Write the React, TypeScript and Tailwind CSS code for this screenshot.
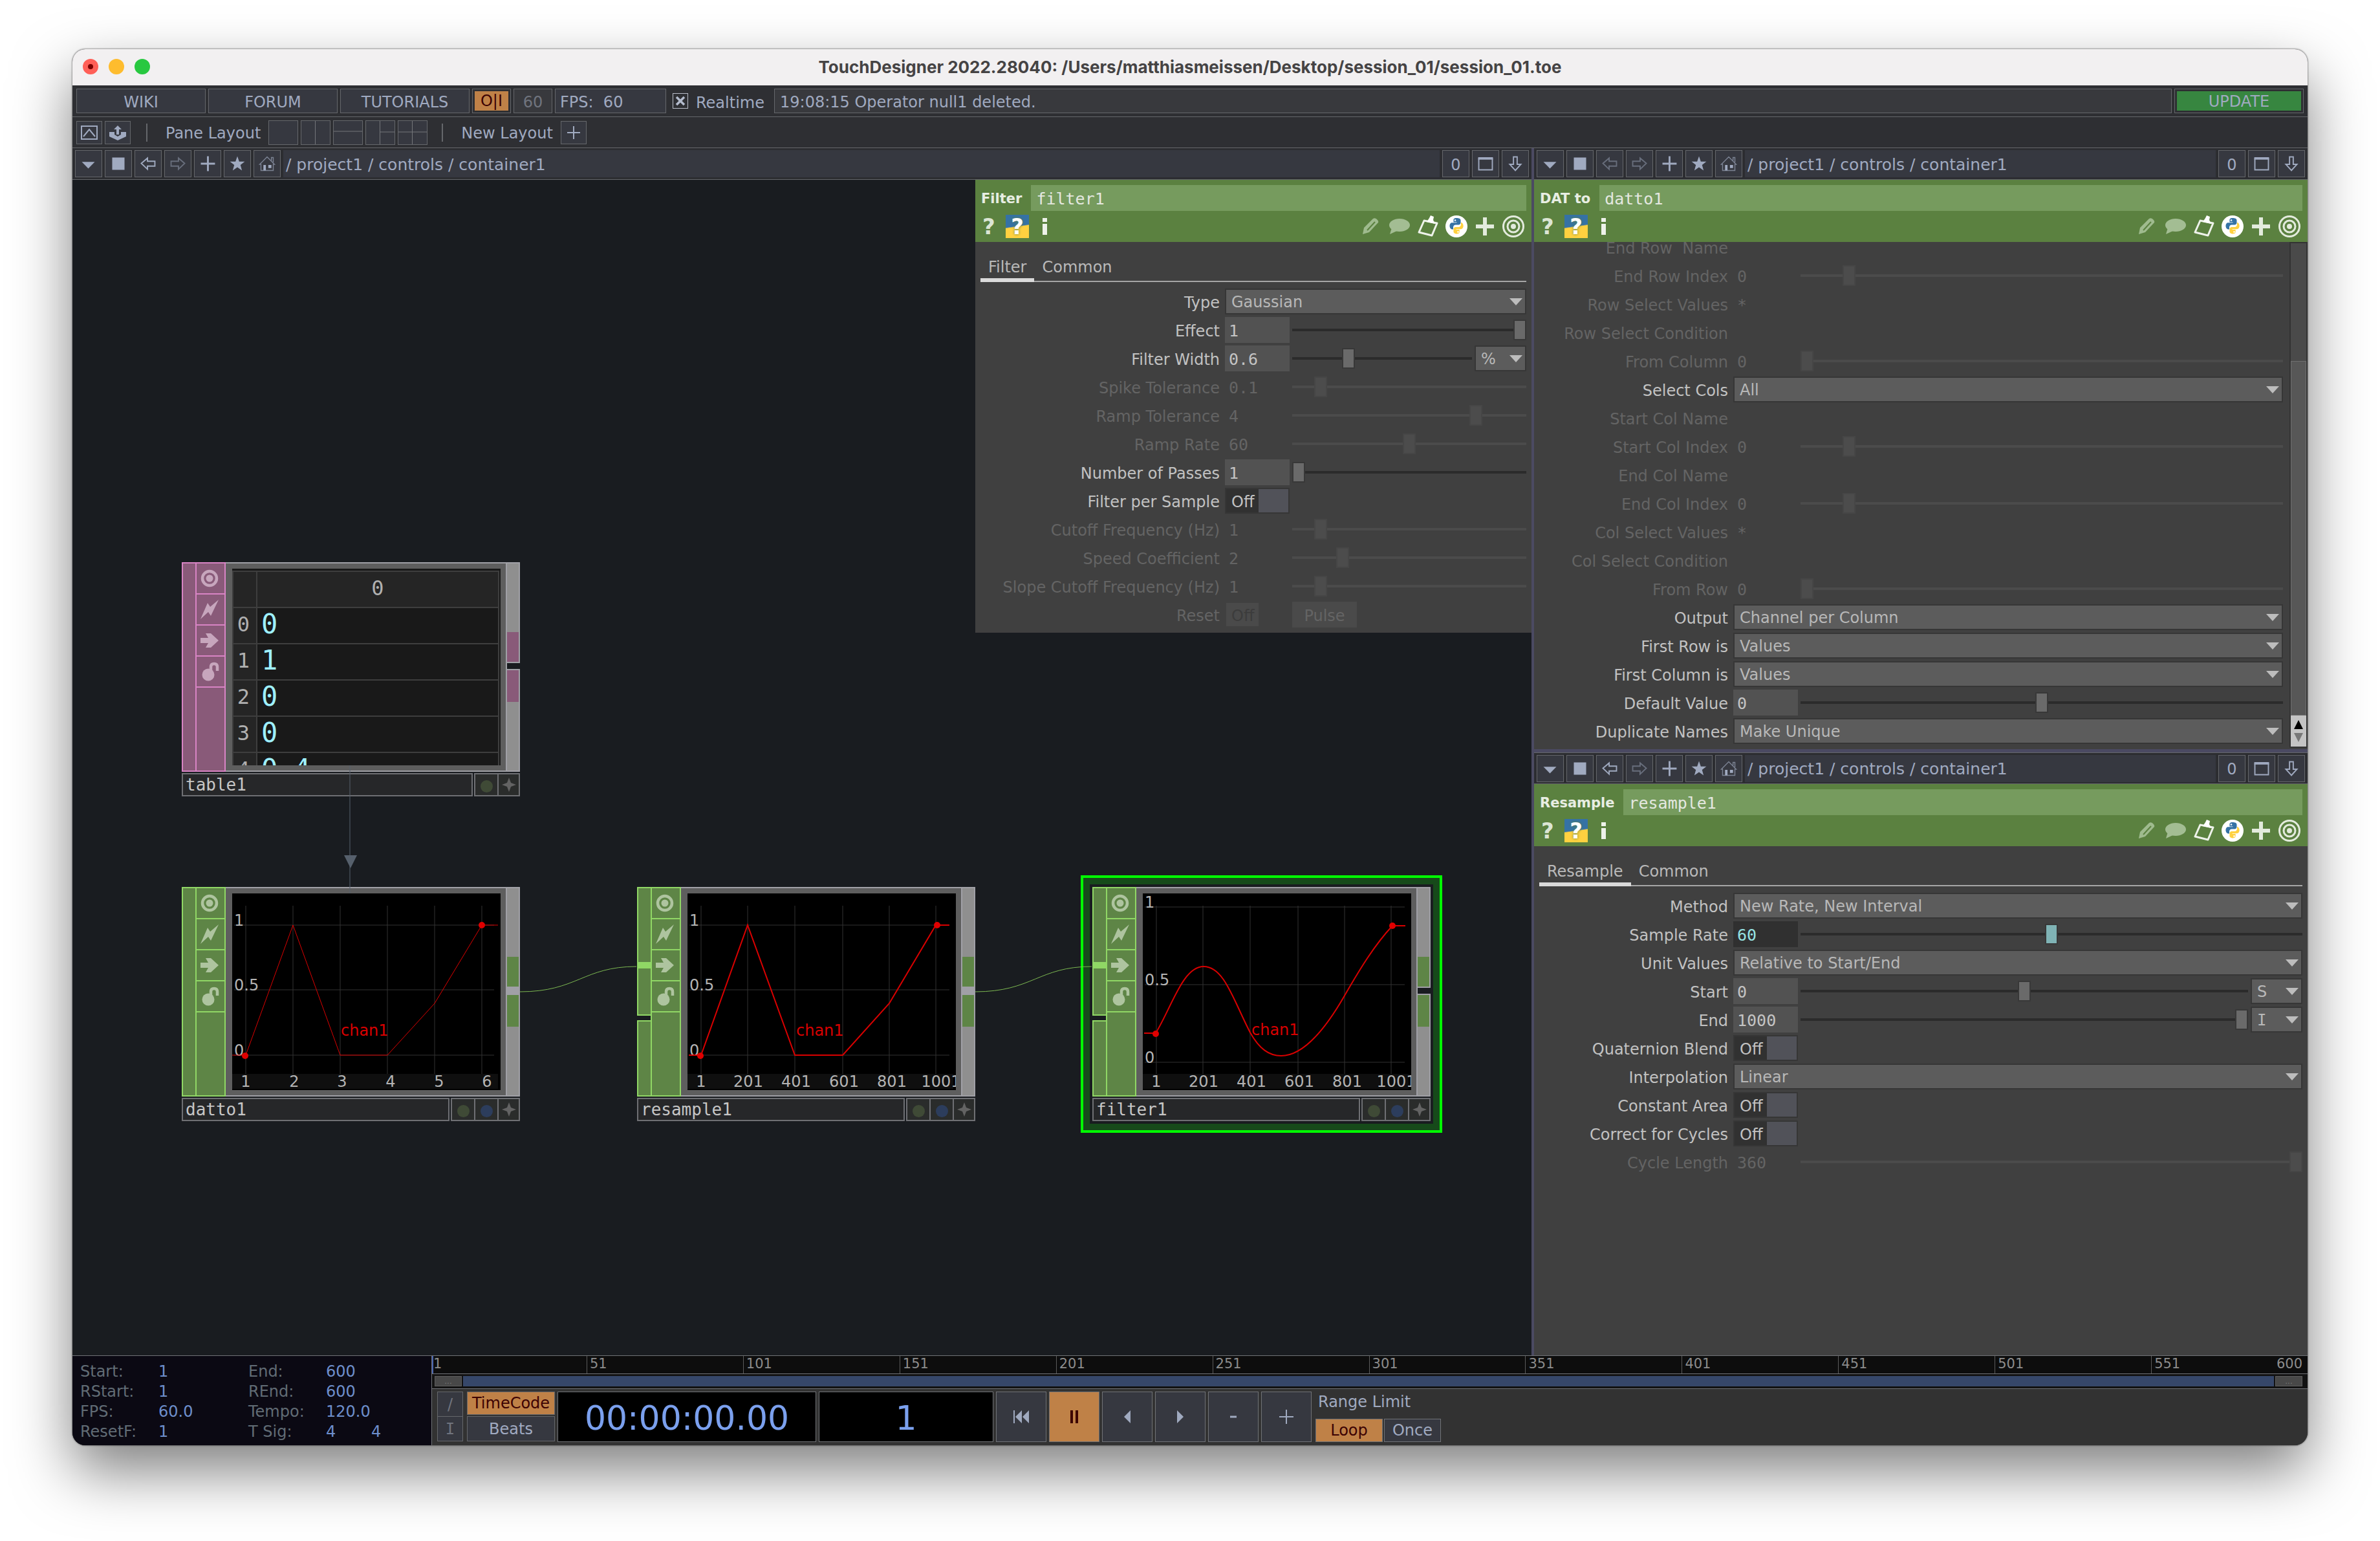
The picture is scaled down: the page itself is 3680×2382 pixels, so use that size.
import React, { useId } from "react";

const SANS = "font-['DejaVu_Sans',sans-serif]";
const MONO = "font-['DejaVu_Sans_Mono',monospace]";

/* ---------- pane bar ---------- */

const paneBtn =
  "flex size-[42px] shrink-0 items-center justify-center border border-[#65676b] bg-[#363840] text-2xl text-[#a0aac0]";

function Glyph({ children, size = 40 }: { children: React.ReactNode; size?: number }) {
  return (
    <svg viewBox="0 0 42 42" width={size} height={size} fill="none" stroke="#a0aac0" strokeWidth="2" aria-hidden="true">
      {children}
    </svg>
  );
}

function PaneBar({ backEnabled, className = "" }: { backEnabled: boolean; className?: string }) {
  const back = backEnabled ? "#a0aac0" : "#686e7c";
  return (
    <div className={`flex h-[49px] shrink-0 items-center gap-1 border-b border-[#65676b] bg-[#2c2d31] px-1 ${className}`}>
      <button className={paneBtn} aria-label="Pane type">
        <Glyph><path d="M10 18H31L20.500 29Z" fill="#a0aac0" stroke="none" /></Glyph>
      </button>
      <button className={paneBtn} aria-label="Stop">
        <Glyph><rect x="11" y="11" width="20" height="20" fill="#a0aac0" stroke="none" /></Glyph>
      </button>
      <button className={paneBtn} aria-label="Back">
        <Glyph><path d="M10 20.500L20 12V17H32V25H20V30Z" stroke={back} /></Glyph>
      </button>
      <button className={paneBtn} aria-label="Forward">
        <Glyph><path d="M32 20.500L22 12V17H10V25H22V30Z" stroke="#686e7c" /></Glyph>
      </button>
      <button className={paneBtn} aria-label="Add bookmark">
        <Glyph><path d="M10 21H33M21.500 9V33" strokeWidth="3" /></Glyph>
      </button>
      <button className={paneBtn} aria-label="Bookmarks">
        <Glyph>
          <path d="M21 9L24 17.500H33L26 23L28.500 32L21 26.800L13.500 32L16 23L9 17.500H18Z" fill="#a0aac0" stroke="none" />
        </Glyph>
      </button>
      <button className={paneBtn} aria-label="Home">
        <Glyph>
          <path d="M9 22L21 10L33 22H31V32H11V22ZM28 16V11H31V19" stroke="#7b8292" strokeWidth="1.500" />
          <path d="M15 23H19V32H15ZM23 23H28V28H23Z" fill="#a0aac0" stroke="none" />
        </Glyph>
      </button>
      <div className="flex h-[42px] flex-1 items-center bg-[#363840] pt-[3px] pl-1 text-[25px] whitespace-pre text-[#a0aac0]">
        / project1 / controls / container1
      </div>
      <button className={`${paneBtn} pt-[3px]`}>0</button>
      <button className={paneBtn} aria-label="Maximize pane">
        <Glyph><path d="M10 12V31H32V12" /><path d="M9 12.500H33" strokeWidth="4" /></Glyph>
      </button>
      <button className={paneBtn} aria-label="Detach pane">
        <Glyph><path d="M21 32L12 22H18V10H24V22H30Z" /></Glyph>
      </button>
    </div>
  );
}

/* ---------- operator header ---------- */

function PythonMark() {
  return (
    <g>
      <path
        d="M17.800 7C13 7 13 9.500 13 11V14H18.500V15H10.500C7.500 15 6.500 18 6.500 20.500S8 26 10.500 26H12.500V22.500C12.500 20 14.500 18.500 16.500 18.500H21.500C23.500 18.500 25 17 25 15V11C25 8 22 7 17.800 7Z"
        transform="translate(1.500 -1.500) scale(.92)"
        fill="#3572a5"
      />
      <path
        d="M18.200 31C23 31 23 28.500 23 27V24H17.500V23H25.500C28.500 23 29.500 20 29.500 17.500S28 12 25.500 12H25.500V15.500C25.500 18 23.500 19.500 21.500 19.500H16.500C14.500 19.500 13 21 13 23V27C13 30 16 31 18.200 31Z"
        transform="translate(1.500 1) scale(.92)"
        fill="#ffd140"
      />
      <circle cx="16" cy="8.500" r="1.300" fill="#fff" />
      <circle cx="20.500" cy="26.500" r="1.300" fill="#fff" />
    </g>
  );
}

function OpHeader({ kind, name }: { kind: string; name: string }) {
  const id = useId();
  return (
    <div className="flex h-24 shrink-0 flex-col bg-[#5b8140] pt-2">
      <div className="flex h-10 items-center pr-2 pl-[9px]">
        <label htmlFor={id} className="pt-[3px] pr-[14px] text-[21px] font-bold whitespace-pre text-[#e8eee3]">
          {kind}
        </label>
        <input
          id={id}
          defaultValue={name}
          className={`h-10 min-w-0 flex-1 bg-[#769b5e] px-2 pt-[2px] text-[25px] text-[#e4e8e0] ${MONO}`}
        />
      </div>
      <div className="flex h-12 items-center justify-between pr-[10px] pl-[11px]">
        <div className="flex items-center gap-2">
          <button aria-label="Help" className="h-9 w-7 text-left text-[34px] leading-9 font-bold text-[#dbe5d4]">?</button>
          <button
            aria-label="Python help"
            className="h-9 w-9 bg-[linear-gradient(172deg,#3572a5_48%,#ffd140_52%)] text-center text-[34px] leading-9 font-bold text-white [text-shadow:0_0_4px_#5b8140]"
          >
            ?
          </button>
          <button aria-label="Info" className="h-9 w-10 pl-2 text-left">
            <svg viewBox="0 0 16 36" width="16" height="36" fill="#eef2ea" aria-hidden="true">
              <rect x="5" y="5" width="7" height="6" />
              <rect x="5" y="14" width="7" height="17" />
            </svg>
          </button>
        </div>
        <div className="flex items-center gap-2">
          <button aria-label="Edit">
            <svg viewBox="0 0 36 36" width="36" height="36" aria-hidden="true">
              <path d="M5 30L7 20L21 6Q24 4 27 7T29 12L15 27Z" fill="#9fbb8e" />
              <path d="M12 24L24 11" stroke="#5b8140" strokeWidth="2" />
            </svg>
          </button>
          <button aria-label="Comment">
            <svg viewBox="0 0 36 36" width="36" height="36" fill="#a3bd93" aria-hidden="true">
              <ellipse cx="18" cy="16" rx="16" ry="10" />
              <path d="M6 20L3 30L16 24Z" />
            </svg>
          </button>
          <button aria-label="Copy parameters">
            <svg viewBox="0 0 36 36" width="36" height="36" aria-hidden="true">
              <path d="M12 9L32 13L24 32L4 27Z" fill="none" stroke="#eef2ea" strokeWidth="3" strokeLinejoin="round" />
              <path d="M16 11L20 5L22 1L27 3L26 8L29 14Z" fill="#fff" />
            </svg>
          </button>
          <button aria-label="Python">
            <svg viewBox="0 0 36 36" width="36" height="36" aria-hidden="true">
              <circle cx="18" cy="18" r="17" fill="#fff" />
              <PythonMark />
            </svg>
          </button>
          <button aria-label="Add parameter">
            <svg viewBox="0 0 36 36" width="36" height="36" stroke="#e3ebdd" strokeWidth="6" aria-hidden="true">
              <path d="M4 18H32M18 4V32" />
            </svg>
          </button>
          <button aria-label="View options">
            <svg viewBox="0 0 36 36" width="36" height="36" fill="none" stroke="#e3ebdd" strokeWidth="3" aria-hidden="true">
              <circle cx="18" cy="18" r="15.500" />
              <circle cx="18" cy="18" r="9" />
              <circle cx="18" cy="18" r="2.500" fill="#e3ebdd" />
            </svg>
          </button>
        </div>
      </div>
    </div>
  );
}

function Tabs({ items }: { items: string[] }) {
  return (
    <div className="mx-2 mt-[18px] mb-[10px] flex h-11 items-stretch text-2xl text-[#b9b9b9]">
      {items.map((t, i) => (
        <button
          key={t}
          className={
            i === 0
              ? "border-b-[6px] border-[#dadada] px-3 pt-[3px]"
              : "flex-1 border-b-2 border-[#a6a6a6] pt-[3px] pb-1 pl-3 text-left"
          }
        >
          {t}
        </button>
      ))}
    </div>
  );
}

/* ---------- parameter rows ---------- */

type Param = {
  label: string;
  off?: boolean;
  menu?: string;
  value?: string;
  slide?: number;
  unit?: string;
  toggle?: boolean;
  pulse?: boolean;
  expr?: boolean;
};

function Menu({ id, value, label, className = "" }: { id?: string; value: string; label?: string; className?: string }) {
  return (
    <span className={`relative flex h-10 ${className}`}>
      <select
        id={id}
        aria-label={label}
        defaultValue={value}
        className={`h-10 w-full appearance-none border-2 border-[#363636] bg-[#5c5c5c] pt-[2px] pl-2 text-2xl text-[#b8b8b8] ${value === "I" ? MONO : ""}`}
      >
        <option>{value}</option>
      </select>
      <svg viewBox="0 0 20 12" width="20" height="12" className="pointer-events-none absolute top-3.5 right-1.5" aria-hidden="true">
        <path d="M0 1H20L10 12Z" fill="#bdbdbd" />
      </svg>
    </span>
  );
}

const rangeBase =
  "h-10 min-w-0 flex-1 appearance-none bg-transparent [&::-webkit-slider-runnable-track]:h-1 [&::-webkit-slider-thumb]:-mt-3.5 [&::-webkit-slider-thumb]:h-8 [&::-webkit-slider-thumb]:w-5 [&::-webkit-slider-thumb]:appearance-none [&::-webkit-slider-thumb]:border-2";
const rangeOn =
  "[&::-webkit-slider-runnable-track]:bg-[#2b2b2b] [&::-webkit-slider-thumb]:border-[#383838] [&::-webkit-slider-thumb]:bg-[#6a6a6a]";
const rangeOff =
  "[&::-webkit-slider-runnable-track]:bg-[#4b4b4b] [&::-webkit-slider-thumb]:border-[#464646] [&::-webkit-slider-thumb]:bg-[#4c4c4c]";
const rangeExpr =
  "[&::-webkit-slider-runnable-track]:bg-[#2b2b2b] [&::-webkit-slider-thumb]:border-[#383838] [&::-webkit-slider-thumb]:bg-[#7fb3b5]";

function Row({ p, cols }: { p: Param; cols: string }) {
  const id = useId();
  const field = p.off ? "bg-transparent text-[#646464]" : p.expr ? "bg-[#303030] text-[#96e3e3]" : "bg-[#525252] text-[#c4c4c4]";
  return (
    <div className={`grid h-10 ${cols} items-center`}>
      <label
        htmlFor={id}
        className={`pt-[3px] pr-2 text-right text-2xl whitespace-pre ${p.off ? "text-[#646464]" : "text-[#c2c2c2]"}`}
      >
        {p.label}
      </label>
      <div className="flex h-10 min-w-0 gap-1">
        {p.menu !== undefined && <Menu id={id} value={p.menu} className="flex-1" />}
        {p.value !== undefined && (
          <input
            id={id}
            defaultValue={p.value}
            disabled={p.off}
            className={`h-10 w-[100px] shrink-0 pt-[2px] pl-1.5 text-[25px] ${MONO} ${field}`}
          />
        )}
        {p.slide !== undefined && (
          <input
            type="range"
            aria-label={`${p.label} slider`}
            min={0}
            max={100}
            defaultValue={p.slide}
            disabled={p.off}
            className={`${rangeBase} ${p.off ? rangeOff : p.expr ? rangeExpr : rangeOn}`}
          />
        )}
        {p.unit && <Menu value={p.unit} label={`${p.label} unit`} className="w-20" />}
        {p.toggle && (
          <span className={`flex h-10 w-[100px] border-2 text-2xl ${p.off ? "border-transparent" : "border-[#363636]"}`}>
            <span className={`w-[50px] pt-1 pl-2 leading-8 ${p.off ? "bg-[#4a4a4a] text-[#3c3c3c]" : "bg-[#313131] text-[#c2c2c2]"}`}>
              Off
            </span>
            <input
              id={id}
              type="checkbox"
              disabled={p.off}
              className={`h-full flex-1 appearance-none ${p.off ? "bg-transparent" : "bg-[#515259]"}`}
            />
          </span>
        )}
        {p.pulse && (
          <button disabled className="h-10 w-[100px] bg-[#4a4a4a] pt-[3px] text-2xl text-[#646464]">
            Pulse
          </button>
        )}
      </div>
    </div>
  );
}

const filterParams: Param[] = [
  { label: "Type", menu: "Gaussian" },
  { label: "Effect", value: "1", slide: 100 },
  { label: "Filter Width", value: "0.6", slide: 30, unit: "%" },
  { label: "Spike Tolerance", value: "0.1", slide: 10, off: true },
  { label: "Ramp Tolerance", value: "4", slide: 80, off: true },
  { label: "Ramp Rate", value: "60", slide: 50, off: true },
  { label: "Number of Passes", value: "1", slide: 0 },
  { label: "Filter per Sample", toggle: true },
  { label: "Cutoff Frequency (Hz)", value: "1", slide: 10, off: true },
  { label: "Speed Coefficient", value: "2", slide: 20, off: true },
  { label: "Slope Cutoff Frequency (Hz)", value: "1", slide: 10, off: true },
  { label: "Reset", toggle: true, pulse: true, off: true },
];

const dattoParams: Param[] = [
  { label: "End Row  Name", value: "", off: true },
  { label: "End Row Index", value: "0", slide: 9, off: true },
  { label: "Row Select Values", value: "*", off: true },
  { label: "Row Select Condition", value: "", off: true },
  { label: "From Column", value: "0", slide: 0, off: true },
  { label: "Select Cols", menu: "All" },
  { label: "Start Col Name", value: "", off: true },
  { label: "Start Col Index", value: "0", slide: 9, off: true },
  { label: "End Col Name", value: "", off: true },
  { label: "End Col Index", value: "0", slide: 9, off: true },
  { label: "Col Select Values", value: "*", off: true },
  { label: "Col Select Condition", value: "", off: true },
  { label: "From Row", value: "0", slide: 0, off: true },
  { label: "Output", menu: "Channel per Column" },
  { label: "First Row is", menu: "Values" },
  { label: "First Column is", menu: "Values" },
  { label: "Default Value", value: "0", slide: 50 },
  { label: "Duplicate Names", menu: "Make Unique" },
];

const resampleParams: Param[] = [
  { label: "Method", menu: "New Rate, New Interval" },
  { label: "Sample Rate", value: "60", slide: 50, expr: true },
  { label: "Unit Values", menu: "Relative to Start/End" },
  { label: "Start", value: "0", slide: 50, unit: "S" },
  { label: "End", value: "1000", slide: 100, unit: "I" },
  { label: "Quaternion Blend", toggle: true },
  { label: "Interpolation", menu: "Linear" },
  { label: "Constant Area", toggle: true },
  { label: "Correct for Cycles", toggle: true },
  { label: "Cycle Length", value: "360", slide: 100, off: true },
];

/* ---------- network nodes ---------- */

type Tone = "pink" | "green";
const toneBg = { pink: "bg-[#895a79]", green: "bg-[#5e8546]" };
const toneLine = { pink: "border-[#d884c4]", green: "border-[#90d765]" };
const toneGlyph = { pink: "#c7a6bd", green: "#aec49f" };

function FlagIcon({ kind, color }: { kind: number; color: string }) {
  return (
    <svg viewBox="0 0 32 32" width="32" height="32" fill={color} aria-hidden="true">
      {kind === 0 && (
        <>
          <circle cx="16" cy="16" r="11" fill="none" stroke={color} strokeWidth="4.500" />
          <circle cx="16" cy="16" r="5.500" />
        </>
      )}
      {kind === 1 && <path d="M30 1L18 26L14 20L2 31L13 6L17 12Z" />}
      {kind === 2 && <path d="M2 12H14L10 5H18L30 16L18 27H10L14 20H2Z" />}
      {kind === 3 && (
        <>
          <circle cx="14" cy="21" r="9.500" />
          <path d="M18 14V9Q18 4 23 4T28 9V15" fill="none" stroke={color} strokeWidth="4.500" />
        </>
      )}
    </svg>
  );
}

function Node({
  tone,
  name,
  input,
  wired,
  dots,
  children,
}: {
  tone: Tone;
  name: string;
  input?: boolean;
  wired?: boolean;
  dots: string[];
  children: React.ReactNode;
}) {
  const bg = toneBg[tone];
  const line = toneLine[tone];
  return (
    <div className="w-[523px] bg-[#191c20]">
      <div className="flex h-[324px]">
        {input ? (
          <div className="flex w-[21px] flex-col gap-[7px]">
            <div className={`h-[199px] border-y-2 border-l-2 pt-[114px] ${bg} ${line}`}>
              <div className="h-[10px] bg-[#90d765]" />
            </div>
            <div className={`flex-1 border-y-2 border-l-2 ${bg} ${line}`} />
          </div>
        ) : (
          <div className={`w-[21px] border-y-2 border-l-2 ${bg} ${line}`} />
        )}
        <div className={`flex w-[47px] flex-col border-2 ${bg} ${line}`}>
          {["Viewer", "Cook", "Export", "Lock"].map((f, i) => (
            <button key={f} aria-label={f} className={`flex h-12 items-center justify-center border-b-2 pr-[3px] ${line}`}>
              <FlagIcon kind={i} color={toneGlyph[tone]} />
            </button>
          ))}
        </div>
        <div className="min-w-0 flex-1 border-y-2 border-[#a0a0a6] bg-[#5e5e5e] py-2 pr-2 pl-2.5">
          <div className="h-[304px] overflow-hidden bg-black">{children}</div>
        </div>
        <div className="flex w-[22px] flex-col">
          <div className="flex h-[156px] flex-col justify-end border-x-2 border-t-2 border-b-2 border-[#a0a0a6] bg-[#8f8f8f]">
            <div className={`h-[46px] ${bg}`} />
          </div>
          <div className={`h-[9px] ${wired ? "bg-[#a0a0a6]" : "border-l-2 border-[#a0a0a6]"}`} />
          <div className="flex-1 border-2 border-[#a0a0a6] bg-[#8f8f8f]">
            <div className={`h-[49px] ${bg}`} />
          </div>
        </div>
      </div>
      <div className="mt-0.5 flex h-9 gap-0.5">
        <div className={`flex flex-1 items-center border-2 border-[#6e6f73] bg-[#262729] pl-1 text-[26px] leading-8 text-[#c6c6c6] ${MONO}`}>
          {name}
        </div>
        <div className="flex divide-x-2 divide-[#6e6f73] border-2 border-[#6e6f73] bg-[#2a2c2b]">
          {dots.map((d) => (
            <span key={d} className="flex w-9 items-center justify-center pt-1">
              <span className={`size-[19px] rounded-full ${d}`} />
            </span>
          ))}
          <span className="flex w-[31px] items-center justify-center">
            <svg viewBox="0 0 22 22" width="22" height="22" fill="#636363" aria-hidden="true">
              <path d="M11 0L14 8L22 11L14 14L11 22L8 14L0 11L8 8Z" />
            </svg>
          </span>
        </div>
      </div>
    </div>
  );
}

const GREEN_DOT = "bg-[#3f4a36]";
const BLUE_DOT = "bg-[#2c3d5c]";

function Chart({
  xs,
  ys,
  labels,
  labelX,
  path,
  dots,
  tag,
  width = 2,
}: {
  xs: number[];
  ys: number[];
  labels: string[];
  labelX: number[];
  path: string;
  dots: [number, number][];
  tag: [number, number];
  width?: number;
}) {
  return (
    <svg viewBox="0 0 415 304" width="415" height="304" className={`block text-2xl ${SANS}`} role="img" aria-label="Channel viewer">
      <rect width="411" height="23" y="279" fill="#0f0f0f" />
      {xs.map((x) => (
        <path key={x} d={`M${x} 19V279`} stroke="#333" />
      ))}
      {ys.map((y) => (
        <path key={y} d={`M3 ${y}H405`} stroke="#333" />
      ))}
      {ys.map((y, i) => (
        <text key={y} x="3" y={y + 1} fill="#b4b4b4">
          {["1", "0.5", "0"][i]}
        </text>
      ))}
      {labels.map((l, i) => (
        <text key={l} x={labelX[i]} y="299" textAnchor="middle" fill="#b4b4b4">
          {l}
        </text>
      ))}
      <path d={path} fill="none" stroke="#d90000" strokeWidth={width} />
      {dots.map(([x, y]) => (
        <circle key={x} cx={x} cy={y} r="5" fill="#e00000" />
      ))}
      <text x={tag[0]} y={tag[1]} fill="#d90000">
        chan1
      </text>
    </svg>
  );
}

const sampleXs = [21, 93, 166, 240, 312, 384];
const sampleLabels = ["1", "201", "401", "601", "801", "1001"];
const sampleLabelX = [21, 94, 168, 242, 316, 392];

function TableView() {
  const rows = ["0", "1", "0", "0", "0.4"];
  const edge = "border-2 border-[#3e3e3e]";
  return (
    <div className={`h-full bg-[#191919] pt-[3px] pr-0.5 ${MONO}`}>
      <table className="w-full table-fixed border-collapse">
        <thead>
          <tr className="h-14 text-[32px] text-[#b0b0b0]">
            <th className={`w-[37px] bg-[#252525] font-normal ${edge}`} />
            <th className={`bg-[#252525] p-0 pb-1 leading-none font-normal ${edge}`}>0</th>
          </tr>
        </thead>
        <tbody>
          {rows.map((r, i) => (
            <tr key={i} className="h-14">
              <th className={`bg-[#252525] p-0 pr-1 pb-1 text-[32px] leading-none font-normal text-[#b0b0b0] ${edge}`}>{i}</th>
              <td className={`p-0 pb-1 pl-[6px] text-[42px] leading-none text-[#9ff0ff] ${edge}`}>{r}</td>
            </tr>
          ))}
        </tbody>
      </table>
    </div>
  );
}

function Network() {
  return (
    <div className="relative min-h-0 flex-1 overflow-hidden bg-[#191c20]">
      <div className="absolute top-[591px] left-[169px]">
        <Node tone="pink" name="table1" dots={[GREEN_DOT]}>
          <TableView />
        </Node>
      </div>
      <div className="absolute top-[1093px] left-[169px]">
        <Node tone="green" name="datto1" wired dots={[GREEN_DOT, BLUE_DOT]}>
          <Chart
            xs={[21, 94, 167, 240, 313, 386]}
            ys={[49, 149, 250]}
            labels={["1", "2", "3", "4", "5", "6"]}
            labelX={[21, 96, 170, 245, 320, 394]}
            path="M0 250H21L94 49L167 250H240L313 170L386 49H411"
            dots={[[20, 251], [386, 49]]}
            tag={[168, 220]}
            width={1}
          />
        </Node>
      </div>
      <div className="absolute top-[1093px] left-[873px]">
        <Node tone="green" name="resample1" input wired dots={[GREEN_DOT, BLUE_DOT]}>
          <Chart
            xs={sampleXs}
            ys={[49, 149, 250]}
            labels={sampleLabels}
            labelX={sampleLabelX}
            path="M2 250H21L93 49L166 250H240L312 170L384 49H405"
            dots={[[20, 251], [386, 49]]}
            tag={[168, 220]}
          />
        </Node>
      </div>
      <div className="absolute top-[1075px] left-[1559px] border-4 border-[#00ff00] bg-[#164a1a] p-[10px]">
        <div className="bg-[#191c20] p-1">
          <Node tone="green" name="filter1" input dots={[GREEN_DOT, BLUE_DOT]}>
            <Chart
              xs={sampleXs}
              ys={[21, 141, 261]}
              labels={sampleLabels}
              labelX={sampleLabelX}
              path="M2 216H20C45 175 62 113 94 113C126 113 140 165 166 215C180 240 195 251 214 251C250 251 285 205 312 158C335 118 358 80 386 50H406"
              dots={[[20, 217], [386, 50]]}
              tag={[168, 219]}
            />
          </Node>
        </div>
      </div>
      <svg className="pointer-events-none absolute top-0 left-0" width="2256" height="1816" fill="none" aria-hidden="true">
        <path d="M429 905V1103" stroke="#56606c" />
        <path d="M420 1044H440L430 1064Z" fill="#56606c" />
        <path d="M692 1255C780 1255 790 1216 872 1216" stroke="#7cb851" />
        <path d="M1396 1255C1484 1255 1494 1216 1576 1216" stroke="#7cb851" />
      </svg>
      <section className="absolute top-0 right-0 w-[860px] bg-[#404040] pb-2" aria-label="Filter parameters">
        <OpHeader kind="Filter" name="filter1" />
        <Tabs items={["Filter", "Common"]} />
        <div className="flex flex-col gap-1 pr-2">
          {filterParams.map((p) => (
            <Row key={p.label} p={p} cols="grid-cols-[386px_minmax(0,1fr)]" />
          ))}
        </div>
      </section>
    </div>
  );
}

/* ---------- timeline ---------- */

const ticks = ["1", "51", "101", "151", "201", "251", "301", "351", "401", "451", "501", "551"];

function Timeline() {
  const info = [
    ["Start:", "1", "End:", "600", ""],
    ["RStart:", "1", "REnd:", "600", ""],
    ["FPS:", "60.0", "Tempo:", "120.0", ""],
    ["ResetF:", "1", "T Sig:", "4", "4"],
  ];
  const play = "flex h-[78px] w-[78px] items-center justify-center border border-[#707276] bg-[#363840]";
  const readout = "flex h-[78px] items-center justify-center border border-[#707276] bg-black pt-[5px] text-[52px] text-[#7ba0ee]";
  return (
    <div className="flex h-[139px] shrink-0 border-t border-[#707276] bg-[#323232]">
      <div className="grid w-[556px] shrink-0 grid-cols-[121px_139px_120px_70px_1fr] content-start border-r border-[#707276] bg-[#0b0913] pt-[9px] pl-3 text-2xl leading-[31px]">
        {info.map((r) =>
          r.map((c, i) => (
            <span key={r[0] + i} className={i === 0 || i === 2 ? "text-[#616c75]" : "text-[#6d8ecb]"}>
              {c}
            </span>
          )),
        )}
      </div>
      <div className="flex min-w-0 flex-1 flex-col">
        <div className="flex h-7 border-b border-[#707276] bg-[#0d0d0d] text-[21px] leading-6 text-[#8c8c8c]">
          {ticks.map((t, i) => (
            <div
              key={t}
              className={`flex flex-1 justify-between pr-2 ${i === 0 ? "border-l-2 border-[#4a66b0]" : "border-l border-[#5b5b5b] pl-1"}`}
            >
              <span>{t}</span>
              {i === 11 && <span>600</span>}
            </div>
          ))}
        </div>
        <div className="flex h-[23px] items-center gap-0.5 border-b border-[#707276] bg-[#121212] pr-2 pl-1">
          <div className="flex h-4 w-[42px] items-center justify-center border border-[#5c5c5c] bg-[#484848] text-xs leading-none text-[#777]">...</div>
          <div className="h-4 flex-1 bg-[#36476a]" />
          <div className="flex h-4 w-[42px] items-center justify-center border border-[#5c5c5c] bg-[#484848] text-xs leading-none text-[#777]">...</div>
        </div>
        <div className="flex flex-1 items-start gap-1 pt-1 pl-2 text-2xl text-[#a0aac0]">
          <div className="flex h-[77px] w-10 flex-col divide-y divide-[#65676b] border border-[#65676b] bg-[#363840] text-[#70747e]">
            <button className="flex-1">/</button>
            <button className={`flex-1 ${MONO}`}>I</button>
          </div>
          <div className="ml-0.5 flex h-[77px] w-[136px] flex-col gap-0.5">
            <button className="h-9 border border-[#65676b] bg-[#bf8147] text-[#3c0203]">TimeCode</button>
            <button className="flex-1 border border-[#65676b] bg-[#363840]">Beats</button>
          </div>
          <div className={`${readout} w-[400px]`}>00:00:00.00</div>
          <div className={`${readout} w-[270px]`}>1</div>
          <button className={play} aria-label="Jump to start">
            <svg viewBox="0 0 24 20" width="24" height="20" fill="#a0aac0" aria-hidden="true">
              <path d="M0 0H2V20H0ZM13 0V20L3 10ZM24 0V20L14 10Z" />
            </svg>
          </button>
          <button
            className="flex h-[78px] w-[78px] items-center justify-center border border-[#707276] bg-[#bf8147]"
            aria-label="Pause"
          >
            <svg viewBox="0 0 14 20" width="14" height="20" fill="#3c0203" aria-hidden="true">
              <path d="M1 0H5V20H1ZM9 0H13V20H9Z" />
            </svg>
          </button>
          <button className={play} aria-label="Play backward">
            <svg viewBox="0 0 10 20" width="10" height="20" fill="#a0aac0" aria-hidden="true">
              <path d="M10 0V20L0 10Z" />
            </svg>
          </button>
          <button className={play} aria-label="Play forward">
            <svg viewBox="0 0 10 20" width="10" height="20" fill="#a0aac0" aria-hidden="true">
              <path d="M0 0V20L10 10Z" />
            </svg>
          </button>
          <button className={play} aria-label="Step back">
            <svg viewBox="0 0 22 22" width="22" height="22" stroke="#a0aac0" strokeWidth="3" aria-hidden="true">
              <path d="M6 11H16" />
            </svg>
          </button>
          <button className={play} aria-label="Step forward">
            <svg viewBox="0 0 22 22" width="22" height="22" stroke="#a0aac0" strokeWidth="2" aria-hidden="true">
              <path d="M0 11H22M11 0V22" />
            </svg>
          </button>
          <div className="flex h-[78px] flex-col justify-between pl-0.5">
            <span className="pl-1">Range Limit</span>
            <div className="flex h-9 gap-0.5">
              <button className="w-[104px] border border-[#707276] bg-[#bf8147] text-[#3c0203]">Loop</button>
              <button className="w-[88px] border border-[#707276] bg-[#363840]">Once</button>
            </div>
          </div>
        </div>
      </div>
    </div>
  );
}

/* ---------- application ---------- */

function TopBars() {
  const link = "flex h-[38px] w-[200px] items-center justify-center border border-[#65676b] bg-[#363840] pt-[3px]";
  const small = "flex h-9 w-10 items-center justify-center border border-[#65676b] bg-[#363840]";
  return (
    <div className="bg-[#2e2f33] text-2xl text-[#a0aac0]">
      <div className="flex h-[49px] items-center gap-1 border-b border-[#65676b] px-1.5">
        <a href="#wiki" className={link}>WIKI</a>
        <a href="#forum" className={link}>FORUM</a>
        <a href="#tutorials" className={link}>TUTORIALS</a>
        <button className="h-[38px] w-[60px] border border-[#65676b] p-[3px]">
          <span className="block bg-[#bf8147] leading-[30px] text-[#3c0203]">O|I</span>
        </button>
        <button className="h-[38px] w-[60px] border border-[#65676b] bg-[#38393d] pt-[3px] leading-8 text-[#70747e]">60</button>
        <div className="flex h-[38px] w-[172px] items-center border border-[#65676b] bg-[#363840] pt-[3px] pl-[7px] whitespace-pre">FPS:  60</div>
        <label className="ml-1.5 flex w-[153px] items-center gap-3">
          <span className="relative flex size-6">
            <input type="checkbox" defaultChecked className="size-6 appearance-none border border-[#b9bdc8]" />
            <svg viewBox="0 0 24 24" width="24" height="24" stroke="#b4bccd" strokeWidth="3.500" className="pointer-events-none absolute" aria-hidden="true">
              <path d="M6 6L18 18M18 6L6 18" />
            </svg>
          </span>
          <span className="pt-1.5">Realtime</span>
        </label>
        <div className="flex h-[38px] flex-1 items-center border border-[#65676b] bg-[#38393d] pt-[3px] pl-2">
          19:08:15 Operator null1 deleted.
        </div>
        <button className="h-[38px] w-[200px] border border-[#65676b] p-[3px]">
          <span className="block bg-[#378640] pt-[2px] leading-7">UPDATE</span>
        </button>
      </div>
      <div className="flex h-12 items-center gap-1 border-b border-[#65676b] px-1.5">
        <button className={small} aria-label="Collapse">
          <svg viewBox="0 0 28 24" width="28" height="24" fill="none" stroke="#a0aac0" strokeWidth="2" aria-hidden="true">
            <path d="M2 2H26V22H2ZM5 18L14 7L23 18" />
          </svg>
        </button>
        <button className={small} aria-label="Palette">
          <svg viewBox="0 0 28 24" width="28" height="24" fill="#a0aac0" aria-hidden="true">
            <path d="M14 1L20 7H16V15H12V7H8ZM1 11H9V15L14 18L19 15V11H27V18L14 24L1 18Z" />
          </svg>
        </button>
        <span className="mx-5 h-7 w-0.5 bg-[#65676b]" />
        <span className="mr-2 ml-1 pt-[2px]">Pane Layout</span>
        {["", "M22.500 0V38", "M0 17H46", "M22.500 0V38M22.500 18H46", "M22.500 0V38M0 18H46"].map((d, i) => (
          <button key={i} aria-label={`Pane layout ${i + 1}`} className="h-[38px] w-[46px] border border-[#65676b] bg-[#363840]">
            <svg viewBox="1 1 44 36" width="44" height="36" stroke="#74767a" aria-hidden="true">
              {d && <path d={d} />}
            </svg>
          </button>
        ))}
        <span className="mr-5 ml-[18px] h-7 w-0.5 bg-[#65676b]" />
        <span className="mr-2 ml-1 pt-[2px]">New Layout</span>
        <button className={small} aria-label="New layout">
          <svg viewBox="0 0 22 22" width="22" height="22" stroke="#a0aac0" strokeWidth="2" aria-hidden="true">
            <path d="M1 11H21M11 1V21" />
          </svg>
        </button>
      </div>
    </div>
  );
}

export default function App() {
  return (
    <div className={`flex min-h-screen bg-white px-28 pt-[76px] pb-[148px] ${SANS}`}>
      <div className="flex min-w-0 flex-1 flex-col overflow-hidden rounded-[20px] bg-[#2e2f33] shadow-[0_0_2px_1px_rgba(0,0,0,0.35),0_40px_90px_rgba(0,0,0,0.5)]">
        <header className="relative flex h-14 shrink-0 items-center justify-center bg-[#f2f0f1] pb-[2px]">
          <div className="absolute left-4 flex gap-4">
            <button aria-label="Close" className="flex size-6 items-center justify-center rounded-full bg-[#ff5f57]">
              <span className="size-2 rounded-full bg-[#7a0000]" />
            </button>
            <button aria-label="Minimize" className="size-6 rounded-full bg-[#febc2e]" />
            <button aria-label="Zoom" className="size-6 rounded-full bg-[#28c840]" />
          </div>
          <h1 className="font-['Inter',sans-serif] text-[26px] font-bold text-[#454344]">
            TouchDesigner 2022.28040: /Users/matthiasmeissen/Desktop/session_01/session_01.toe
          </h1>
        </header>
        <TopBars />
        <main className="grid min-h-0 flex-1 grid-cols-[minmax(0,2256fr)_4px_minmax(0,1196fr)]">
          <div className="flex flex-col">
            <PaneBar backEnabled />
            <Network />
          </div>
          <div className="bg-[#4b4a62]" />
          <div className="flex flex-col bg-[#404040]">
            <PaneBar backEnabled={false} />
            <section className="flex flex-col" aria-label="DAT to parameters">
              <OpHeader kind="DAT to" name="datto1" />
              <div className="flex h-[784px] overflow-hidden">
                <div className="-mt-3 flex min-w-0 flex-1 flex-col gap-1 pr-2.5">
                  {dattoParams.map((p) => (
                    <Row key={p.label} p={p} cols="grid-cols-[308px_minmax(0,1fr)]" />
                  ))}
                </div>
                <div className="flex h-[782px] w-7 flex-col border-2 border-[#333] bg-[#4a4a4a]">
                  <div className="h-[182px]" />
                  <div className="flex-1 border border-[#707070] bg-[#575757]" />
                  <div className="flex h-12 flex-col items-center justify-evenly bg-[#c4c4c4]">
                    <svg viewBox="0 0 14 14" width="14" height="14" aria-hidden="true"><path d="M0 14L7 0L14 14Z" fill="#000" /></svg>
                    <svg viewBox="0 0 14 14" width="14" height="14" aria-hidden="true"><path d="M0 0H14L7 14Z" fill="#777" /></svg>
                  </div>
                </div>
              </div>
            </section>
            <div className="h-[5px] shrink-0 bg-[#4b4a62]" />
            <PaneBar backEnabled className="border-t" />
            <section className="flex flex-col" aria-label="Resample parameters">
              <OpHeader kind="Resample" name="resample1" />
              <Tabs items={["Resample", "Common"]} />
              <div className="flex flex-col gap-1 pr-2">
                {resampleParams.map((p) => (
                  <Row key={p.label} p={p} cols="grid-cols-[308px_minmax(0,1fr)]" />
                ))}
              </div>
            </section>
          </div>
        </main>
        <Timeline />
      </div>
    </div>
  );
}
